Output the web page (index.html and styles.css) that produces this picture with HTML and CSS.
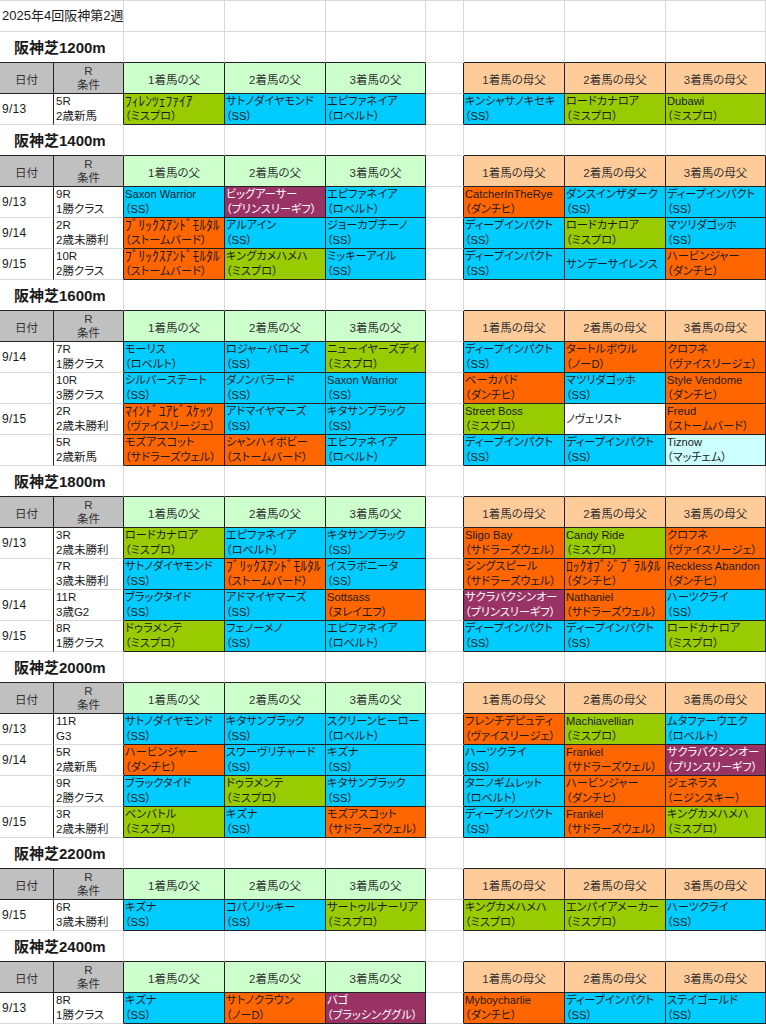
FILE: index.html
```html
<!DOCTYPE html>
<html lang="ja">
<head>
<meta charset="utf-8">
<title>2025年4回阪神第2週</title>
<link rel="stylesheet" href="styles.css">
</head>
<body>
<div class="sheet">

  <div class="row">
    <div class="c title">2025年4回阪神第2週</div>
    <div class="c"></div><div class="c"></div><div class="c"></div><div class="c"></div><div class="c"></div><div class="c"></div><div class="c"></div>
  </div>

  <!-- 1200m -->
  <div class="row">
    <div class="c sec">阪神芝1200m</div>
    <div class="c sb"></div><div class="c sb"></div><div class="c sb"></div><div class="c"></div><div class="c sb"></div><div class="c sb"></div><div class="c sb"></div>
  </div>
  <div class="row">
    <div class="c h gray">日付</div><div class="c h gray two"><span>R</span><span>条件</span></div>
    <div class="c h sire">1着馬の父</div><div class="c h sire">2着馬の父</div><div class="c h sire">3着馬の父</div>
    <div class="c gap"></div>
    <div class="c h dam">1着馬の母父</div><div class="c h dam">2着馬の母父</div><div class="c h dam">3着馬の母父</div>
  </div>
  <div class="row">
    <div class="c d">9/13</div><div class="c r"><span>5R</span><span>2歳新馬</span></div>
    <div class="c v g"><span class="hw">ﾌｨﾚﾝﾂｪﾌｧｲｱ</span><span>（ミスプロ）</span></div>
    <div class="c v b"><span>サトノダイヤモンド</span><span>（SS）</span></div>
    <div class="c v b"><span>エピファネイア</span><span>（ロベルト）</span></div>
    <div class="c gap"></div>
    <div class="c v b"><span>キンシャサノキセキ</span><span>（SS）</span></div>
    <div class="c v g"><span>ロードカナロア</span><span>（ミスプロ）</span></div>
    <div class="c v g"><span>Dubawi</span><span>（ミスプロ）</span></div>
  </div>

  <!-- 1400m -->
  <div class="row">
    <div class="c sec">阪神芝1400m</div>
    <div class="c sb"></div><div class="c sb"></div><div class="c sb"></div><div class="c"></div><div class="c sb"></div><div class="c sb"></div><div class="c sb"></div>
  </div>
  <div class="row">
    <div class="c h gray">日付</div><div class="c h gray two"><span>R</span><span>条件</span></div>
    <div class="c h sire">1着馬の父</div><div class="c h sire">2着馬の父</div><div class="c h sire">3着馬の父</div>
    <div class="c gap"></div>
    <div class="c h dam">1着馬の母父</div><div class="c h dam">2着馬の母父</div><div class="c h dam">3着馬の母父</div>
  </div>
  <div class="row">
    <div class="c d">9/13</div><div class="c r"><span>9R</span><span>1勝クラス</span></div>
    <div class="c v b"><span>Saxon Warrior</span><span>（SS）</span></div>
    <div class="c v p"><span>ビッグアーサー</span><span>（プリンスリーギフ）</span></div>
    <div class="c v b"><span>エピファネイア</span><span>（ロベルト）</span></div>
    <div class="c gap"></div>
    <div class="c v o"><span>CatcherInTheRye</span><span>（ダンチヒ）</span></div>
    <div class="c v b"><span>ダンスインザダーク</span><span>（SS）</span></div>
    <div class="c v b"><span>ディープインパクト</span><span>（SS）</span></div>
  </div>
  <div class="row">
    <div class="c d">9/14</div><div class="c r"><span>2R</span><span>2歳未勝利</span></div>
    <div class="c v o"><span class="hw">ﾌﾞﾘｯｸｽｱﾝﾄﾞﾓﾙﾀﾙ</span><span>（ストームバード）</span></div>
    <div class="c v b"><span>アルアイン</span><span>（SS）</span></div>
    <div class="c v b"><span>ジョーカプチーノ</span><span>（SS）</span></div>
    <div class="c gap"></div>
    <div class="c v b"><span>ディープインパクト</span><span>（SS）</span></div>
    <div class="c v g"><span>ロードカナロア</span><span>（ミスプロ）</span></div>
    <div class="c v b"><span>マツリダゴッホ</span><span>（SS）</span></div>
  </div>
  <div class="row">
    <div class="c d">9/15</div><div class="c r"><span>10R</span><span>2勝クラス</span></div>
    <div class="c v o"><span class="hw">ﾌﾞﾘｯｸｽｱﾝﾄﾞﾓﾙﾀﾙ</span><span>（ストームバード）</span></div>
    <div class="c v g"><span>キングカメハメハ</span><span>（ミスプロ）</span></div>
    <div class="c v b"><span>ミッキーアイル</span><span>（SS）</span></div>
    <div class="c gap"></div>
    <div class="c v b"><span>ディープインパクト</span><span>（SS）</span></div>
    <div class="c v b"><span>サンデーサイレンス</span></div>
    <div class="c v o"><span>ハービンジャー</span><span>（ダンチヒ）</span></div>
  </div>

  <!-- 1600m -->
  <div class="row">
    <div class="c sec">阪神芝1600m</div>
    <div class="c sb"></div><div class="c sb"></div><div class="c sb"></div><div class="c"></div><div class="c sb"></div><div class="c sb"></div><div class="c sb"></div>
  </div>
  <div class="row">
    <div class="c h gray">日付</div><div class="c h gray two"><span>R</span><span>条件</span></div>
    <div class="c h sire">1着馬の父</div><div class="c h sire">2着馬の父</div><div class="c h sire">3着馬の父</div>
    <div class="c gap"></div>
    <div class="c h dam">1着馬の母父</div><div class="c h dam">2着馬の母父</div><div class="c h dam">3着馬の母父</div>
  </div>
  <div class="row">
    <div class="c d">9/14</div><div class="c r"><span>7R</span><span>1勝クラス</span></div>
    <div class="c v b"><span>モーリス</span><span>（ロベルト）</span></div>
    <div class="c v b"><span>ロジャーバローズ</span><span>（SS）</span></div>
    <div class="c v g"><span>ニューイヤーズデイ</span><span>（ミスプロ）</span></div>
    <div class="c gap"></div>
    <div class="c v b"><span>ディープインパクト</span><span>（SS）</span></div>
    <div class="c v o"><span>タートルボウル</span><span>（ノーD）</span></div>
    <div class="c v o"><span>クロフネ</span><span>（ヴァイスリージェ）</span></div>
  </div>
  <div class="row">
    <div class="c d"></div><div class="c r"><span>10R</span><span>3勝クラス</span></div>
    <div class="c v b"><span>シルバーステート</span><span>（SS）</span></div>
    <div class="c v b"><span>ダノンバラード</span><span>（SS）</span></div>
    <div class="c v b"><span>Saxon Warrior</span><span>（SS）</span></div>
    <div class="c gap"></div>
    <div class="c v o"><span>ベーカバド</span><span>（ダンチヒ）</span></div>
    <div class="c v b"><span>マツリダゴッホ</span><span>（SS）</span></div>
    <div class="c v o"><span>Style Vendome</span><span>（ダンチヒ）</span></div>
  </div>
  <div class="row">
    <div class="c d">9/15</div><div class="c r"><span>2R</span><span>2歳未勝利</span></div>
    <div class="c v o"><span class="hw">ﾏｲﾝﾄﾞﾕｱﾋﾞｽｹｯﾂ</span><span>（ヴァイスリージェ）</span></div>
    <div class="c v b"><span>アドマイヤマーズ</span><span>（SS）</span></div>
    <div class="c v b"><span>キタサンブラック</span><span>（SS）</span></div>
    <div class="c gap"></div>
    <div class="c v g"><span>Street Boss</span><span>（ミスプロ）</span></div>
    <div class="c v w"><span>ノヴェリスト</span></div>
    <div class="c v o"><span>Freud</span><span>（ストームバード）</span></div>
  </div>
  <div class="row">
    <div class="c d"></div><div class="c r"><span>5R</span><span>2歳新馬</span></div>
    <div class="c v o"><span>モズアスコット</span><span>（サドラーズウェル）</span></div>
    <div class="c v o"><span>シャンハイボビー</span><span>（ストームバード）</span></div>
    <div class="c v b"><span>エピファネイア</span><span>（ロベルト）</span></div>
    <div class="c gap"></div>
    <div class="c v b"><span>ディープインパクト</span><span>（SS）</span></div>
    <div class="c v b"><span>ディープインパクト</span><span>（SS）</span></div>
    <div class="c v lc"><span>Tiznow</span><span>（マッチェム）</span></div>
  </div>

  <!-- 1800m -->
  <div class="row">
    <div class="c sec">阪神芝1800m</div>
    <div class="c sb"></div><div class="c sb"></div><div class="c sb"></div><div class="c"></div><div class="c sb"></div><div class="c sb"></div><div class="c sb"></div>
  </div>
  <div class="row">
    <div class="c h gray">日付</div><div class="c h gray two"><span>R</span><span>条件</span></div>
    <div class="c h sire">1着馬の父</div><div class="c h sire">2着馬の父</div><div class="c h sire">3着馬の父</div>
    <div class="c gap"></div>
    <div class="c h dam">1着馬の母父</div><div class="c h dam">2着馬の母父</div><div class="c h dam">3着馬の母父</div>
  </div>
  <div class="row">
    <div class="c d">9/13</div><div class="c r"><span>3R</span><span>2歳未勝利</span></div>
    <div class="c v g"><span>ロードカナロア</span><span>（ミスプロ）</span></div>
    <div class="c v b"><span>エピファネイア</span><span>（ロベルト）</span></div>
    <div class="c v b"><span>キタサンブラック</span><span>（SS）</span></div>
    <div class="c gap"></div>
    <div class="c v o"><span>Sligo Bay</span><span>（サドラーズウェル）</span></div>
    <div class="c v g"><span>Candy Ride</span><span>（ミスプロ）</span></div>
    <div class="c v o"><span>クロフネ</span><span>（ヴァイスリージェ）</span></div>
  </div>
  <div class="row">
    <div class="c d"></div><div class="c r"><span>7R</span><span>3歳未勝利</span></div>
    <div class="c v b"><span>サトノダイヤモンド</span><span>（SS）</span></div>
    <div class="c v o"><span class="hw">ﾌﾞﾘｯｸｽｱﾝﾄﾞﾓﾙﾀﾙ</span><span>（ストームバード）</span></div>
    <div class="c v b"><span>イスラボニータ</span><span>（SS）</span></div>
    <div class="c gap"></div>
    <div class="c v o"><span>シングスピール</span><span>（サドラーズウェル）</span></div>
    <div class="c v o"><span class="hw">ﾛｯｸｵﾌﾞｼﾞﾌﾞﾗﾙﾀﾙ</span><span>（ダンチヒ）</span></div>
    <div class="c v o"><span>Reckless Abandon</span><span>（ダンチヒ）</span></div>
  </div>
  <div class="row">
    <div class="c d">9/14</div><div class="c r"><span>11R</span><span>3歳G2</span></div>
    <div class="c v b"><span>ブラックタイド</span><span>（SS）</span></div>
    <div class="c v b"><span>アドマイヤマーズ</span><span>（SS）</span></div>
    <div class="c v o"><span>Sottsass</span><span>（ヌレイエフ）</span></div>
    <div class="c gap"></div>
    <div class="c v p"><span>サクラバクシンオー</span><span>（プリンスリーギフ）</span></div>
    <div class="c v o"><span>Nathaniel</span><span>（サドラーズウェル）</span></div>
    <div class="c v b"><span>ハーツクライ</span><span>（SS）</span></div>
  </div>
  <div class="row">
    <div class="c d">9/15</div><div class="c r"><span>8R</span><span>1勝クラス</span></div>
    <div class="c v g"><span>ドゥラメンテ</span><span>（ミスプロ）</span></div>
    <div class="c v b"><span>フェノーメノ</span><span>（SS）</span></div>
    <div class="c v b"><span>エピファネイア</span><span>（ロベルト）</span></div>
    <div class="c gap"></div>
    <div class="c v b"><span>ディープインパクト</span><span>（SS）</span></div>
    <div class="c v b"><span>ディープインパクト</span><span>（SS）</span></div>
    <div class="c v g"><span>ロードカナロア</span><span>（ミスプロ）</span></div>
  </div>

  <!-- 2000m -->
  <div class="row">
    <div class="c sec">阪神芝2000m</div>
    <div class="c sb"></div><div class="c sb"></div><div class="c sb"></div><div class="c"></div><div class="c sb"></div><div class="c sb"></div><div class="c sb"></div>
  </div>
  <div class="row">
    <div class="c h gray">日付</div><div class="c h gray two"><span>R</span><span>条件</span></div>
    <div class="c h sire">1着馬の父</div><div class="c h sire">2着馬の父</div><div class="c h sire">3着馬の父</div>
    <div class="c gap"></div>
    <div class="c h dam">1着馬の母父</div><div class="c h dam">2着馬の母父</div><div class="c h dam">3着馬の母父</div>
  </div>
  <div class="row">
    <div class="c d">9/13</div><div class="c r"><span>11R</span><span>G3</span></div>
    <div class="c v b"><span>サトノダイヤモンド</span><span>（SS）</span></div>
    <div class="c v b"><span>キタサンブラック</span><span>（SS）</span></div>
    <div class="c v b"><span>スクリーンヒーロー</span><span>（ロベルト）</span></div>
    <div class="c gap"></div>
    <div class="c v o"><span>フレンチデピュティ</span><span>（ヴァイスリージェ）</span></div>
    <div class="c v g"><span>Machiavellian</span><span>（ミスプロ）</span></div>
    <div class="c v b"><span>ムタファーウエク</span><span>（ロベルト）</span></div>
  </div>
  <div class="row">
    <div class="c d">9/14</div><div class="c r"><span>5R</span><span>2歳新馬</span></div>
    <div class="c v o"><span>ハービンジャー</span><span>（ダンチヒ）</span></div>
    <div class="c v b"><span>スワーヴリチャード</span><span>（SS）</span></div>
    <div class="c v b"><span>キズナ</span><span>（SS）</span></div>
    <div class="c gap"></div>
    <div class="c v b"><span>ハーツクライ</span><span>（SS）</span></div>
    <div class="c v o"><span>Frankel</span><span>（サドラーズウェル）</span></div>
    <div class="c v p"><span>サクラバクシンオー</span><span>（プリンスリーギフ）</span></div>
  </div>
  <div class="row">
    <div class="c d"></div><div class="c r"><span>9R</span><span>2勝クラス</span></div>
    <div class="c v b"><span>ブラックタイド</span><span>（SS）</span></div>
    <div class="c v g"><span>ドゥラメンテ</span><span>（ミスプロ）</span></div>
    <div class="c v b"><span>キタサンブラック</span><span>（SS）</span></div>
    <div class="c gap"></div>
    <div class="c v b"><span>タニノギムレット</span><span>（ロベルト）</span></div>
    <div class="c v o"><span>ハービンジャー</span><span>（ダンチヒ）</span></div>
    <div class="c v o"><span>ジェネラス</span><span>（ニジンスキー）</span></div>
  </div>
  <div class="row">
    <div class="c d">9/15</div><div class="c r"><span>3R</span><span>2歳未勝利</span></div>
    <div class="c v g"><span>ベンバトル</span><span>（ミスプロ）</span></div>
    <div class="c v b"><span>キズナ</span><span>（SS）</span></div>
    <div class="c v o"><span>モズアスコット</span><span>（サドラーズウェル）</span></div>
    <div class="c gap"></div>
    <div class="c v b"><span>ディープインパクト</span><span>（SS）</span></div>
    <div class="c v o"><span>Frankel</span><span>（サドラーズウェル）</span></div>
    <div class="c v g"><span>キングカメハメハ</span><span>（ミスプロ）</span></div>
  </div>

  <!-- 2200m -->
  <div class="row">
    <div class="c sec">阪神芝2200m</div>
    <div class="c sb"></div><div class="c sb"></div><div class="c sb"></div><div class="c"></div><div class="c sb"></div><div class="c sb"></div><div class="c sb"></div>
  </div>
  <div class="row">
    <div class="c h gray">日付</div><div class="c h gray two"><span>R</span><span>条件</span></div>
    <div class="c h sire">1着馬の父</div><div class="c h sire">2着馬の父</div><div class="c h sire">3着馬の父</div>
    <div class="c gap"></div>
    <div class="c h dam">1着馬の母父</div><div class="c h dam">2着馬の母父</div><div class="c h dam">3着馬の母父</div>
  </div>
  <div class="row">
    <div class="c d">9/15</div><div class="c r"><span>6R</span><span>3歳未勝利</span></div>
    <div class="c v b"><span>キズナ</span><span>（SS）</span></div>
    <div class="c v b"><span>コパノリッキー</span><span>（SS）</span></div>
    <div class="c v g"><span>サートゥルナーリア</span><span>（ミスプロ）</span></div>
    <div class="c gap"></div>
    <div class="c v g"><span>キングカメハメハ</span><span>（ミスプロ）</span></div>
    <div class="c v g"><span>エンパイアメーカー</span><span>（ミスプロ）</span></div>
    <div class="c v b"><span>ハーツクライ</span><span>（SS）</span></div>
  </div>

  <!-- 2400m -->
  <div class="row">
    <div class="c sec">阪神芝2400m</div>
    <div class="c sb"></div><div class="c sb"></div><div class="c sb"></div><div class="c"></div><div class="c sb"></div><div class="c sb"></div><div class="c sb"></div>
  </div>
  <div class="row">
    <div class="c h gray">日付</div><div class="c h gray two"><span>R</span><span>条件</span></div>
    <div class="c h sire">1着馬の父</div><div class="c h sire">2着馬の父</div><div class="c h sire">3着馬の父</div>
    <div class="c gap"></div>
    <div class="c h dam">1着馬の母父</div><div class="c h dam">2着馬の母父</div><div class="c h dam">3着馬の母父</div>
  </div>
  <div class="row">
    <div class="c d">9/13</div><div class="c r"><span>8R</span><span>1勝クラス</span></div>
    <div class="c v b"><span>キズナ</span><span>（SS）</span></div>
    <div class="c v o"><span>サトノクラウン</span><span>（ノーD）</span></div>
    <div class="c v p"><span>バゴ</span><span>（ブラッシンググル）</span></div>
    <div class="c gap"></div>
    <div class="c v o"><span>Myboycharlie</span><span>（ダンチヒ）</span></div>
    <div class="c v b"><span>ディープインパクト</span><span>（SS）</span></div>
    <div class="c v b"><span>ステイゴールド</span><span>（SS）</span></div>
  </div>

</div>
</body>
</html>
```
FILE: styles.css
```css
html, body {
  margin: 0;
  padding: 0;
  background: #ffffff;
}

body {
  font-family: "Liberation Sans", "Noto Sans CJK JP", sans-serif;
  font-size: 12px;
  color: #1a1a1a;
  font-feature-settings: "palt" 1;
}

.sheet {
  width: 766px;
  border-top: 1px solid #d9d9d9;
}

.row {
  display: grid;
  grid-template-columns: 54px 70px 101px 101px 100px 38px 101px 101px 100px;
  height: 31px;
}

.c {
  box-sizing: border-box;
  height: 31px;
  border-right: 1px solid #d9d9d9;
  border-bottom: 1px solid #d9d9d9;
  overflow: hidden;
  white-space: nowrap;
}

/* title row */
.title {
  grid-column: span 2;
  overflow: visible;
  font-size: 13px;
  line-height: 30px;
  padding-left: 2px;
  position: relative;
  z-index: 1;
}

/* section heading */
.sec {
  grid-column: span 2;
  overflow: visible;
  font-size: 15px;
  font-weight: bold;
  line-height: 32px;
  padding-left: 14px;
  border-bottom-color: #222;
}

.sb {
  border-bottom-color: #222;
}

/* header cells */
.h {
  border-right-color: #222;
  border-bottom-color: #222;
  display: flex;
  align-items: center;
  justify-content: center;
  font-size: 11.5px;
  color: #333;
  padding-top: 2px;
}

.h.two {
  flex-direction: column;
  line-height: 14px;
  padding-top: 0;
}

.gray { background: #c0c0c0; }
.sire { background: #ccffcc; }
.dam  { background: #ffcc99; }

.gap {
  border-right-color: #222;
}

/* date / race cells */
.d {
  border-right-color: #222;
  line-height: 30px;
  padding-left: 2px;
  letter-spacing: 0.3px;
}

.r {
  border-right-color: #222;
  display: flex;
  flex-direction: column;
  justify-content: center;
  line-height: 15px;
  padding-left: 2px;
  font-size: 11.5px;
}

/* value cells */
.v {
  border-right-color: #222;
  border-bottom-color: #222;
  display: flex;
  flex-direction: column;
  justify-content: center;
  line-height: 15px;
  padding-left: 1px;
  font-size: 11.2px;
}

.v .hw {
  font-size: 13.5px;
  line-height: 15px;
}

.b  { background: #00ccff; }
.g  { background: #99cc00; }
.o  { background: #ff6600; }
.p  { background: #993366; color: #ffffff; }
.lc { background: #ccffff; }
.w  { background: #ffffff; }
```
